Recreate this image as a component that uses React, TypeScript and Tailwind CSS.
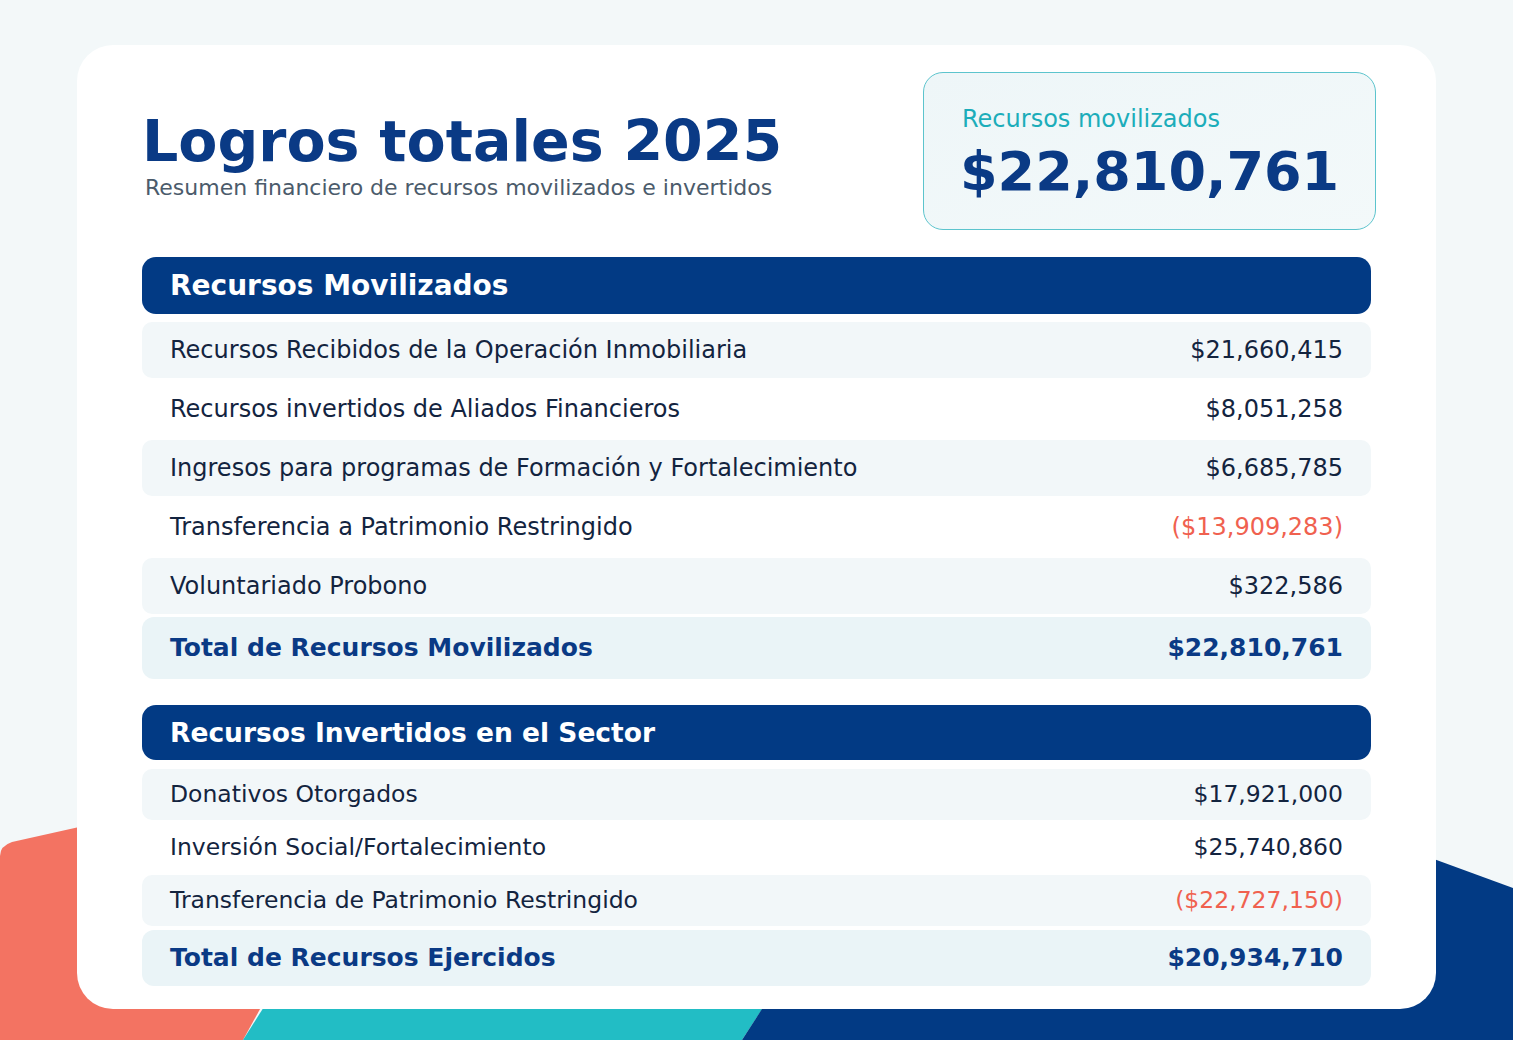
import React from 'react'

type Row = { label: string; value: string; negative?: boolean }

const movilizados: Row[] = [
  { label: 'Recursos Recibidos de la Operación Inmobiliaria', value: '$21,660,415' },
  { label: 'Recursos invertidos de Aliados Financieros', value: '$8,051,258' },
  { label: 'Ingresos para programas de Formación y Fortalecimiento', value: '$6,685,785' },
  { label: 'Transferencia a Patrimonio Restringido', value: '($13,909,283)', negative: true },
  { label: 'Voluntariado Probono', value: '$322,586' },
]

const invertidos: Row[] = [
  { label: 'Donativos Otorgados', value: '$17,921,000' },
  { label: 'Inversión Social/Fortalecimiento', value: '$25,740,860' },
  { label: 'Transferencia de Patrimonio Restringido', value: '($22,727,150)', negative: true },
]

// ── Background shapes ────────────────────────────────────────────────────────

function Backdrop() {
  return (
    <svg className="absolute inset-0 h-full w-full" viewBox="0 0 1513 1040" preserveAspectRatio="none">
      <path d="M0,1040 L0,856 Q0,846 12,842 L200,800 L320,900 L243,1040 Z" fill="#f37362" />
      <path d="M243,1040 L300,950 L820,920 L742,1040 Z" fill="#22bdc5" />
      <path d="M742,1040 L800,950 L1300,810 L1513,888 L1513,1040 Z" fill="#023a84" />
    </svg>
  )
}

// ── Pieces ───────────────────────────────────────────────────────────────────

function SectionHeader({ title, size, height }: { title: string; size: string; height: string }) {
  return (
    <div className={['flex items-center rounded-[14px] bg-[#023a84] px-[28px]', height].join(' ')}>
      <h2 className={['font-bold text-white', size].join(' ')}>{title}</h2>
    </div>
  )
}

function DataRow({ row, shaded, height, size }: { row: Row; shaded: boolean; height: string; size: string }) {
  return (
    <div
      className={[
        'flex items-center justify-between rounded-[10px] px-[28px] text-[#13243f]',
        height,
        size,
        shaded ? 'bg-[#f2f7f9]' : '',
      ].join(' ')}
    >
      <span>{row.label}</span>
      <span className={row.negative ? 'text-[#f0614f]' : ''}>{row.value}</span>
    </div>
  )
}

function TotalRow({ label, value, height }: { label: string; value: string; height: string }) {
  return (
    <div className={['flex items-center justify-between rounded-[12px] bg-[#eaf4f7] px-[28px] text-[25px] font-bold text-[#0a3a85]', height].join(' ')}>
      <span>{label}</span>
      <span>{value}</span>
    </div>
  )
}

export default function App() {
  return (
    <div
      className="relative min-h-[1040px] w-full overflow-hidden bg-[#f3f8f9] pt-[45px] pl-[77px] pr-[77px]"
      style={{ fontFamily: '"DejaVu Sans", Verdana, sans-serif' }}
    >
      <Backdrop />

      <div className="relative z-10 h-[964px] rounded-[36px] bg-white px-[65px] pt-[27px]">
        {/* header */}
        <div className="mr-[-5px] flex items-start justify-between">
          <div className="mt-[41px]">
            <h1 className="text-[57px] leading-none font-bold text-[#0a3a85]">Logros totales 2025</h1>
            <p className="mt-[5px] ml-[3px] text-[22px] leading-[1.2] text-[#4b5b6b]">
              Resumen financiero de recursos movilizados e invertidos
            </p>
          </div>
          <div className="h-[158px] w-[453px] rounded-[20px] border border-[#5cc4cd] bg-gradient-to-br from-[#eef6f8] to-[#f3f9fa] pl-[36px] pt-[32px]">
            <p className="ml-[2px] text-[24px] leading-[1.2] text-[#1cadba]">Recursos movilizados</p>
            <p className="mt-[11px] text-[54px] leading-none font-bold text-[#0a3a85]">$22,810,761</p>
          </div>
        </div>

        {/* recursos movilizados */}
        <div className="mt-[27px]">
          <SectionHeader title="Recursos Movilizados" size="text-[28px]" height="h-[57px]" />
          <div className="mt-[8px] flex flex-col gap-[3px]">
            {movilizados.map((r, i) => (
              <DataRow key={r.label} row={r} shaded={i % 2 === 0} height="h-[56px]" size="text-[24px]" />
            ))}
            <TotalRow label="Total de Recursos Movilizados" value="$22,810,761" height="h-[62px]" />
          </div>
        </div>

        {/* recursos invertidos */}
        <div className="mt-[26px]">
          <SectionHeader title="Recursos Invertidos en el Sector" size="text-[26.5px]" height="h-[55px]" />
          <div className="mt-[9px] flex flex-col gap-[2px]">
            {invertidos.map((r, i) => (
              <DataRow key={r.label} row={r} shaded={i % 2 === 0} height="h-[51px]" size="text-[23.5px]" />
            ))}
            <div className="mt-[2px]">
              <TotalRow label="Total de Recursos Ejercidos" value="$20,934,710" height="h-[56px]" />
            </div>
          </div>
        </div>
      </div>
    </div>
  )
}
